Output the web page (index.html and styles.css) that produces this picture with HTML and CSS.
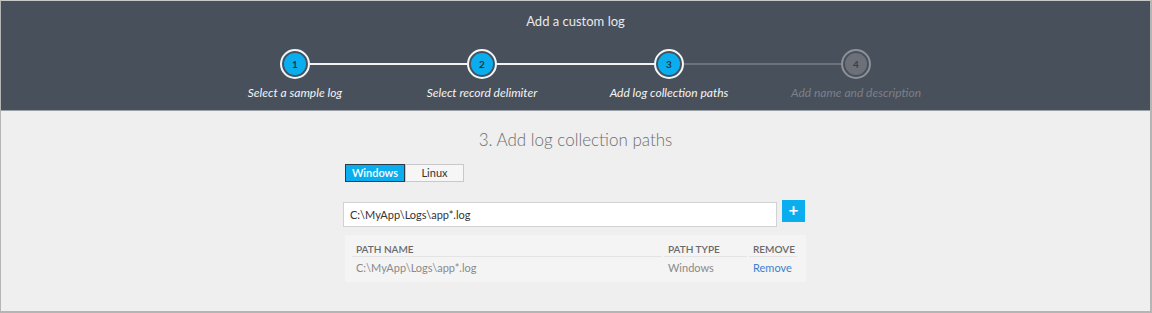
FILE: index.html
```html
<!DOCTYPE html>
<html>
	<head>
		<meta charset="UTF-8">
		<title>Add a custom log</title>
		<link rel="stylesheet" href="styles.css">
	</head>
	<body>
		<div class="frame">
			<div class="head"><!--顶部向导-->
				<div class="title">Add a custom log</div>
				<div class="steps">
					<div class="step done"><span class="dot">1</span><span class="lbl">Select a sample log</span></div>
					<div class="step done"><span class="dot">2</span><span class="lbl">Select record delimiter</span></div>
					<div class="step cur"><span class="dot">3</span><span class="lbl">Add log collection paths</span></div>
					<div class="step off"><span class="dot">4</span><span class="lbl">Add name and description</span></div>
				</div>
			</div>
			<div class="main">
				<h2 class="sub">3. Add log collection paths</h2>
				<div class="box">
					<div class="tabs">
						<div class="tab on">Windows</div>
						<div class="tab">Linux</div>
					</div>
					<div class="addrow">
						<div class="inp">C:\MyApp\Logs\app*.log</div>
						<div class="plus">+</div>
					</div>
					<div class="panel">
						<table class="tb">
							<tr><th class="c1">PATH NAME</th><th class="c2">PATH TYPE</th><th class="c3">REMOVE</th></tr>
							<tr><td>C:\MyApp\Logs\app*.log</td><td>Windows</td><td><a class="rm">Remove</a></td></tr>
						</table>
					</div>
				</div>
			</div>
		</div>
	</body>
</html>
```

FILE: styles.css
```css
*{
	margin: 0;
	padding: 0;
	box-sizing: border-box;
}
body{
	font-family: "Segoe UI", Lato, "Open Sans", sans-serif;
	background: #fff;
}
.frame{
	width: 1152px;
	height: 313px;
	border: 1px solid #b5b5b5;
	border-top-color: #c8c8c8;
	background: #efefef;
	border-right-width: 2px;
	border-bottom-width: 2px;
}
.head{
	height: 110px;
	background: #48505b;
	border-bottom: 1px solid #9ca1a7;
}
.title{
	text-align: center;
	color: #e8e8ea;
	font-size: 13px;
	line-height: 16px;
	padding-top: 12px;
}
.steps{
	display: flex;
	justify-content: center;
	margin-top: 20px;
}
.step{
	width: 187px;
	display: flex;
	flex-direction: column;
	align-items: center;
	position: relative;
}
/* 连接线 */
.step::after{
	content: "";
	position: absolute;
	top: 14px;
	left: 50%;
	width: 187px;
	height: 2px;
	background: #f2f2f2;
}
.step.cur::after{
	background: #6c727b;
}
.step.off::after{
	display: none;
}
.dot{
	width: 30px;
	height: 30px;
	border-radius: 50%;
	border: 2px solid #f4f4f4;
	box-shadow: inset 0 0 0 2px #48505b;
	background: #0aaeee;
	color: #27323e;
	font-size: 10px;
	font-weight: bold;
	display: flex;
	align-items: center;
	justify-content: center;
	position: relative;
	z-index: 1;
}
.off .dot{
	background: #6b7079;
	border-color: #8d9097;
	color: #3a414b;
}
.lbl{
	margin-top: 6px;
	font-size: 12px;
	line-height: 16px;
	font-style: italic;
	color: #f4f4f4;
	white-space: nowrap;
}
.off .lbl{
	color: #7b8089;
}
.main{
	padding-top: 18px;
}
.sub{
	text-align: center;
	font-size: 17px;
	line-height: 22px;
	font-weight: 300;
	color: #6e6e6e;
}
.box{
	width: 463px;
	margin: 13px auto 0;
	padding-left: 1px;
}
.tabs{
	display: flex;
}
.tab{
	width: 59px;
	height: 18px;
	font-size: 11px;
	line-height: 16px;
	text-align: center;
	border: 1px solid #c9c9c9;
	background: #f6f6f6;
	color: #333;
}
.tab.on{
	width: 60px;
	background: #0aaeee;
	border-color: #2c3a46;
	color: #fff;
	font-weight: 600;
}
.addrow{
	display: flex;
	margin-top: 18px;
	margin-left: -2px;
}
.inp{
	width: 434px;
	height: 25px;
	margin-top: 2px;
	background: #fff;
	border: 1px solid #d2d2d2;
	font-size: 11px;
	line-height: 23px;
	padding-left: 6px;
	color: #333;
}
.plus{
	width: 23px;
	height: 22px;
	margin-left: 5px;
	background: #0aaeee;
	color: #fff;
	font-size: 17px;
	font-weight: bold;
	line-height: 20px;
	text-align: center;
}
.panel{
	margin-top: 8px;
	width: 461px;
	height: 47px;
	background: #f4f4f4;
	padding: 5px 6px 0 6px;
}
.tb{
	width: 449px;
	table-layout: fixed;
	border-collapse: separate;
	border-spacing: 2px 0;
	margin-left: -1px;
	font-size: 11px;
}
.tb th{
	text-align: left;
	font-size: 10px;
	font-weight: 600;
	color: #6a6a6a;
	height: 17px;
	padding: 1px 4px 0;
	border-bottom: 1px solid #e4e4e4;
}
.tb td{
	color: #8a8a8a;
	height: 20px;
	padding: 0 4px;
}
.c1{
	width: 310px;
}
.c2{
	width: 83px;
}
.rm{
	color: #3b82cc;
}
```
